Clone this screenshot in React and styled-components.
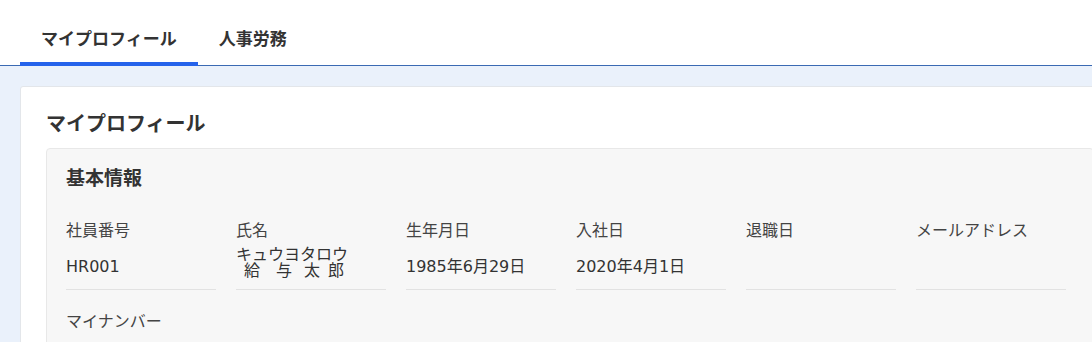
import React from "react";
import styled, { createGlobalStyle } from "styled-components";

const GlobalStyle = createGlobalStyle`
  html, body {
    margin: 0;
    padding: 0;
    background: #eaf1fb;
    overflow: hidden;
  }
  body {
    font-family: "DejaVu Sans", "Noto Sans CJK JP", sans-serif;
    color: #333;
  }
  * { box-sizing: border-box; }
`;

const Page = styled.div`
  width: 100vw;
  min-height: 100vh;
  overflow: hidden;
  background: #eaf1fb;
`;

const Header = styled.header`
  display: flex;
  align-items: flex-end;
  height: 66px;
  padding-left: 20px;
  background: #ffffff;
  border-bottom: 1px solid #3a6ab3;
`;

const Tab = styled.div`
  height: 65px;
  padding: 26px 21px 0;
  font-size: 17px;
  line-height: 24px;
  font-weight: 700;
  color: #333;
  white-space: nowrap;
  border-bottom: 4px solid ${(p) => (p.$active ? "#2563eb" : "transparent")};
  margin-bottom: -1px;
`;

const Main = styled.main`
  padding: 20px 0 0 20px;
`;

const Card = styled.section`
  width: 1100px;
  background: #ffffff;
  border: 1px solid #e3e6ea;
  border-radius: 3px;
  padding: 25px 25px 40px;
`;

const CardTitle = styled.h1`
  margin: 0 0 12px;
  font-size: 20px;
  line-height: 24px;
  font-weight: 700;
  color: #333;
`;

const SectionBox = styled.div`
  background: #f7f7f7;
  border: 1px solid #e8e8e8;
  border-radius: 4px;
  padding: 17px 19px 30px;
`;

const SectionTitle = styled.h2`
  margin: 0 0 29px;
  font-size: 19px;
  line-height: 24px;
  font-weight: 700;
  color: #333;
`;

const FieldGrid = styled.div`
  display: grid;
  grid-template-columns: repeat(6, 150px);
  column-gap: 20px;
  row-gap: 20px;
`;

const Field = styled.div`
  display: flex;
  flex-direction: column;
  min-height: 71px;
  padding-bottom: 10px;
  border-bottom: 1px solid #e2e2e2;
`;

const Label = styled.div`
  font-size: 16px;
  line-height: 24px;
  color: #444;
  white-space: nowrap;
`;

const Value = styled.div`
  margin-top: auto;
  min-height: 24px;
  font-size: 16px;
  line-height: 24px;
  color: #333;
  white-space: nowrap;
`;

const NameRuby = styled.span`
  display: inline-flex;
  align-items: flex-end;
  vertical-align: bottom;
`;

const RubyGroup = styled.span`
  display: inline-flex;
  flex-direction: column;
`;

const Kana = styled.span`
  font-size: 16px;
  line-height: 16px;
  white-space: nowrap;
`;

const Base = styled.span`
  display: flex;
  justify-content: space-around;
  font-size: 16px;
  line-height: 16px;
`;

const fields = [
  { label: "社員番号", value: "HR001" },
  { label: "氏名", ruby: [["キュウヨ", ["給", "与"]], ["タロウ", ["太", "郎"]]] },
  { label: "生年月日", value: "1985年6月29日" },
  { label: "入社日", value: "2020年4月1日" },
  { label: "退職日", value: "" },
  { label: "メールアドレス", value: "" },
  { label: "マイナンバー", value: "" },
];

export default function App() {
  return (
    <Page>
      <GlobalStyle />
      <Header>
        <Tab $active>マイプロフィール</Tab>
        <Tab>人事労務</Tab>
      </Header>
      <Main>
        <Card>
          <CardTitle>マイプロフィール</CardTitle>
          <SectionBox>
            <SectionTitle>基本情報</SectionTitle>
            <FieldGrid>
              {fields.map((f) => (
                <Field key={f.label}>
                  <Label>{f.label}</Label>
                  <Value>
                    {f.ruby ? (
                      <NameRuby>
                        {f.ruby.map(([kana, chars]) => (
                          <RubyGroup key={kana}>
                            <Kana>{kana}</Kana>
                            <Base>
                              {chars.map((c) => (
                                <span key={c}>{c}</span>
                              ))}
                            </Base>
                          </RubyGroup>
                        ))}
                      </NameRuby>
                    ) : (
                      f.value
                    )}
                  </Value>
                </Field>
              ))}
            </FieldGrid>
          </SectionBox>
        </Card>
      </Main>
    </Page>
  );
}
